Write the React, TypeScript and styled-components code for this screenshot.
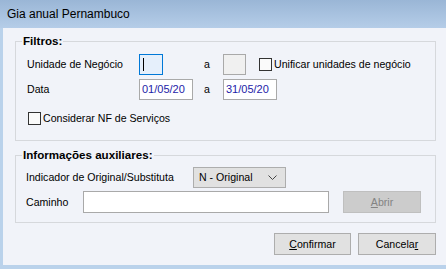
import styled, { createGlobalStyle } from "styled-components";

const GlobalStyle = createGlobalStyle`
  html, body {
    margin: 0;
    padding: 0;
    background: #bad2eb;
  }
  body {
    font-family: "Liberation Sans", Arial, sans-serif;
    font-size: 10.6px;
    color: #000;
  }
`;

const Window = styled.div`
  width: 446px;
  height: 269px;
  display: flex;
  flex-direction: column;
  background: #bad2eb;
  overflow: hidden;
`;

const TitleBar = styled.div`
  height: 28px;
  flex: none;
  display: flex;
  align-items: center;
  padding-left: 7px;
  background: linear-gradient(#9ab6d6, #b5cde8);
  font-size: 12px;
  color: #000;
`;

const Client = styled.div`
  flex: 1;
  margin: 0 0 4px 3px;
  padding: 5px 10px 0 12px;
  background: #f1f3f9;
  display: flex;
  flex-direction: column;
`;

const Group = styled.fieldset<{ $top?: number; $pad: string }>`
  margin: ${({ $top }) => $top ?? 0}px 0 0 0;
  padding: ${({ $pad }) => $pad};
  border: 1px solid #d6d8dc;
  min-width: 0;
`;

const Legend = styled.legend`
  font-weight: 700;
  font-size: 11.6px;
  line-height: 16px;
  padding: 0 1px;
`;

const FilterGrid = styled.div`
  display: grid;
  grid-template-columns: 112px 65px 19px auto;
  grid-template-rows: 22px 22px;
  row-gap: 3px;
  align-items: center;
  margin-left: 5px;
`;

const Label = styled.span<{ $w?: number }>`
  white-space: nowrap;
  ${({ $w }) => ($w ? `width: ${$w}px; flex: none;` : "")}
`;

const TextBox = styled.div<{ $w: number; $h?: number; $focus?: boolean; $disabled?: boolean }>`
  box-sizing: border-box;
  width: ${({ $w }) => $w}px;
  height: ${({ $h }) => $h ?? 21}px;
  border: 1px solid ${({ $focus }) => ($focus ? "#0078d7" : "#a9a9a9")};
  background: ${({ $focus, $disabled }) =>
    $focus ? "#e5effb" : $disabled ? "#f0f0f0" : "#ffffff"};
  display: flex;
  align-items: center;
  padding-left: 2px;
  color: #1d1ca8;
  font-size: 11px;
`;

const Caret = styled.span`
  width: 1px;
  height: 13px;
  background: #000;
  margin-left: 1px;
`;

const Inline = styled.div<{ $gap?: number }>`
  display: flex;
  align-items: center;
  gap: ${({ $gap }) => $gap ?? 0}px;
`;

const Box = styled.span`
  box-sizing: border-box;
  width: 13px;
  height: 13px;
  border: 1px solid #333;
  background: #fafafa;
  flex: none;
  margin-right: 2px;
`;

const CheckRow = styled.div`
  display: flex;
  align-items: center;
  height: 22px;
  margin-top: 7px;
  margin-left: 6px;
`;

const FormRow = styled.div<{ $top?: number }>`
  display: flex;
  align-items: center;
  height: 22px;
  margin-top: ${({ $top }) => $top ?? 0}px;
  margin-left: 4px;
`;

const Select = styled.div`
  box-sizing: border-box;
  width: 93px;
  height: 21px;
  border: 1px solid #adadad;
  background: #e1e1e1;
  display: flex;
  align-items: center;
  justify-content: space-between;
  padding: 0 8px 0 5px;
`;

const Button = styled.div<{ $disabled?: boolean; $w: number }>`
  box-sizing: border-box;
  width: ${({ $w }) => $w}px;
  height: 22px;
  margin-left: ${({ $disabled }) => ($disabled ? 14 : 0)}px;
  border: 1px solid ${({ $disabled }) => ($disabled ? "#bfbfbf" : "#adadad")};
  background: ${({ $disabled }) => ($disabled ? "#cccccc" : "#e1e1e1")};
  color: ${({ $disabled }) => ($disabled ? "#838383" : "#000")};
  display: flex;
  align-items: center;
  justify-content: center;
`;

const Key = styled.span`
  text-decoration: underline;
`;

const ButtonBar = styled.div`
  display: flex;
  justify-content: flex-end;
  gap: 7px;
  margin-top: 10px;
`;

function Check({ children }: { children: React.ReactNode }) {
  return (
    <Inline>
      <Box />
      <span>{children}</span>
    </Inline>
  );
}

export default function App() {
  return (
    <>
      <GlobalStyle />
      <Window>
        <TitleBar>Gia anual Pernambuco</TitleBar>
        <Client>
          <Group $pad="4px 10px 11px 6px">
            <Legend>Filtros:</Legend>
            <FilterGrid>
              <Label>Unidade de Negócio</Label>
              <TextBox $w={24} $focus>
                <Caret />
              </TextBox>
              <span>a</span>
              <Inline $gap={13}>
                <TextBox $w={23} $disabled />
                <Check>Unificar unidades de negócio</Check>
              </Inline>

              <Label>Data</Label>
              <TextBox $w={54}>01/05/20</TextBox>
              <span>a</span>
              <TextBox $w={54}>31/05/20</TextBox>
            </FilterGrid>
            <CheckRow>
              <Check>Considerar NF de Serviços</Check>
            </CheckRow>
          </Group>

          <Group $top={6} $pad="3px 10px 9px 6px">
            <Legend>Informações auxiliares:</Legend>
            <FormRow>
              <Label $w={167}>Indicador de Original/Substituta</Label>
              <Select>
                <span>N - Original</span>
                <svg width="9" height="5" viewBox="0 0 9 5">
                  <polyline points="0.5,0.5 4.5,4.5 8.5,0.5" fill="none" stroke="#444" strokeWidth="1" />
                </svg>
              </Select>
            </FormRow>
            <FormRow $top={3}>
              <Label $w={57}>Caminho</Label>
              <TextBox $w={246} $h={22} />
              <Button $w={78} $disabled>
                <span>
                  <Key>A</Key>brir
                </span>
              </Button>
            </FormRow>
          </Group>

          <ButtonBar>
            <Button $w={77}>
              <span>
                <Key>C</Key>onfirmar
              </span>
            </Button>
            <Button $w={78}>
              <span>
                Cancela<Key>r</Key>
              </span>
            </Button>
          </ButtonBar>
        </Client>
      </Window>
    </>
  );
}
